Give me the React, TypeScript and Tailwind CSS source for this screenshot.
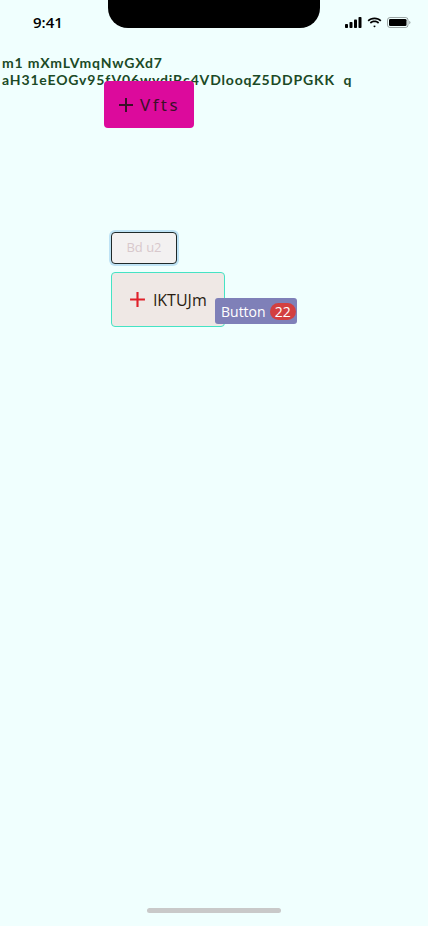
import React from "react";

function Plus({ className }: { className?: string }) {
  return (
    <svg viewBox="0 0 16 16" className={className} fill="none" stroke="currentColor" strokeWidth={2}>
      <path d="M8 1v14M1 8h14" />
    </svg>
  );
}

export default function App() {
  return (
    <div className="relative min-h-[926px] w-[428px] bg-[#f0fffe] flex flex-col overflow-hidden" style={{ fontFamily: "'Open Sans', 'Noto Sans', sans-serif" }}>
      {/* notch */}
      <div className="absolute left-[108px] top-0 h-[28px] w-[212px] rounded-b-[20px] bg-black" />
      {/* status bar */}
      <div className="h-[44px] flex items-center justify-between pl-[33px] pr-[17px] shrink-0">
        <span className="text-[15px] font-semibold text-black pt-[1px]" style={{ fontFamily: "'Open Sans', Inter, sans-serif" }}>9:41</span>
        <div className="flex items-center gap-[5px] pt-[1px]">
          <svg width="17" height="11" viewBox="0 0 17 11" fill="#000">
            <rect x="0" y="7" width="3" height="4" rx="0.8" />
            <rect x="4.5" y="5" width="3" height="6" rx="0.8" />
            <rect x="9" y="2.5" width="3" height="8.5" rx="0.8" />
            <rect x="13.5" y="0" width="3" height="11" rx="0.8" />
          </svg>
          <svg width="15" height="11" viewBox="0 0 15 11" fill="#000">
            <path d="M7.5 2.2c2.2 0 4.2.85 5.7 2.25l1.2-1.25C12.6 1.5 10.2.5 7.5.5S2.4 1.5.6 3.2l1.2 1.25C3.3 3.050 5.3 2.2 7.5 2.2z" />
            <path d="M7.5 5.3c1.35 0 2.55.5 3.5 1.35l1.2-1.25C10.95 4.25 9.3 3.6 7.5 3.6S4.05 4.25 2.8 5.4L4 6.65C4.95 5.8 6.150 5.3 7.5 5.3z" />
            <path d="M7.5 8.4c.5 0 .95.2 1.3.5L7.5 10.5 6.2 8.9c.35-.3.8-.5 1.3-.5z" />
          </svg>
          <svg width="24" height="11" viewBox="0 0 24 11" fill="none">
            <rect x="0.5" y="0.5" width="20.5" height="10" rx="2.5" stroke="#000" strokeOpacity="0.35" />
            <rect x="2" y="2" width="17.5" height="7" rx="1.3" fill="#000" />
            <path d="M22.3 3.8v3.4c.7-.3 1.1-.9 1.1-1.7s-.4-1.4-1.1-1.7z" fill="#000" fillOpacity="0.4" />
          </svg>
        </div>
      </div>

      {/* heading */}
      <div className="pl-[2px] pt-[10px] text-[14px] leading-[17px] font-bold tracking-[0.06em] text-[#1b4a26] whitespace-pre" style={{ fontFamily: "Lato, 'Noto Sans', sans-serif" }}>
        <div>m1 mXmLVmqNwGXd7</div>
        <div>aH31eEOGv95fV06wydiBc4VDlooqZ5DDPGKK  q</div>
      </div>

      {/* pink button */}
      <button className="ml-[104px] -mt-[7px] w-[90px] h-[47px] rounded-[4px] bg-[#dc0a9c] flex items-center justify-center gap-[6px] text-[#3b1028] relative z-10">
        <Plus className="w-[16px] h-[16px]" />
        <span className="text-[17px] tracking-[0.14em]" style={{ fontFamily: "'Noto Sans', sans-serif" }}>Vfts</span>
      </button>

      {/* input */}
      <div className="ml-[111px] mt-[104px] w-[66px] h-[32px] rounded-[4px] border-[1.5px] border-[#1f2a2a] bg-[#f3f1f1] shadow-[0_0_0_2px_#bfe3f5] flex items-center justify-center">
        <span className="text-[13px] text-[#d8c8cc]">Bd u2</span>
      </div>

      {/* button with badge */}
      <div className="relative ml-[111px] mt-[8px] w-[114px] h-[55px]">
        <button className="w-full h-full rounded-[4px] border border-[#45e3c4] bg-[#efe8e5] flex items-center justify-center gap-[7px] text-[#2a1c10]">
          <Plus className="w-[17px] h-[17px] text-[#e0202a]" />
          <span className="text-[16px]">lKTUJm</span>
        </button>
        <div className="absolute left-[104px] top-[26px] w-[82px] h-[26px] rounded-[3px] bg-[#7f80b8] flex items-center pl-[6px] gap-[4px]">
          <span className="text-[14px] text-white">Button</span>
          <span className="h-[17px] px-[5px] rounded-full bg-[#d33f40] text-white text-[14px] leading-[17px]">22</span>
        </div>
      </div>

      {/* home indicator */}
      <div className="absolute left-[147px] bottom-[13px] w-[134px] h-[5px] rounded-full bg-[#c9c9c9]" />
    </div>
  );
}
